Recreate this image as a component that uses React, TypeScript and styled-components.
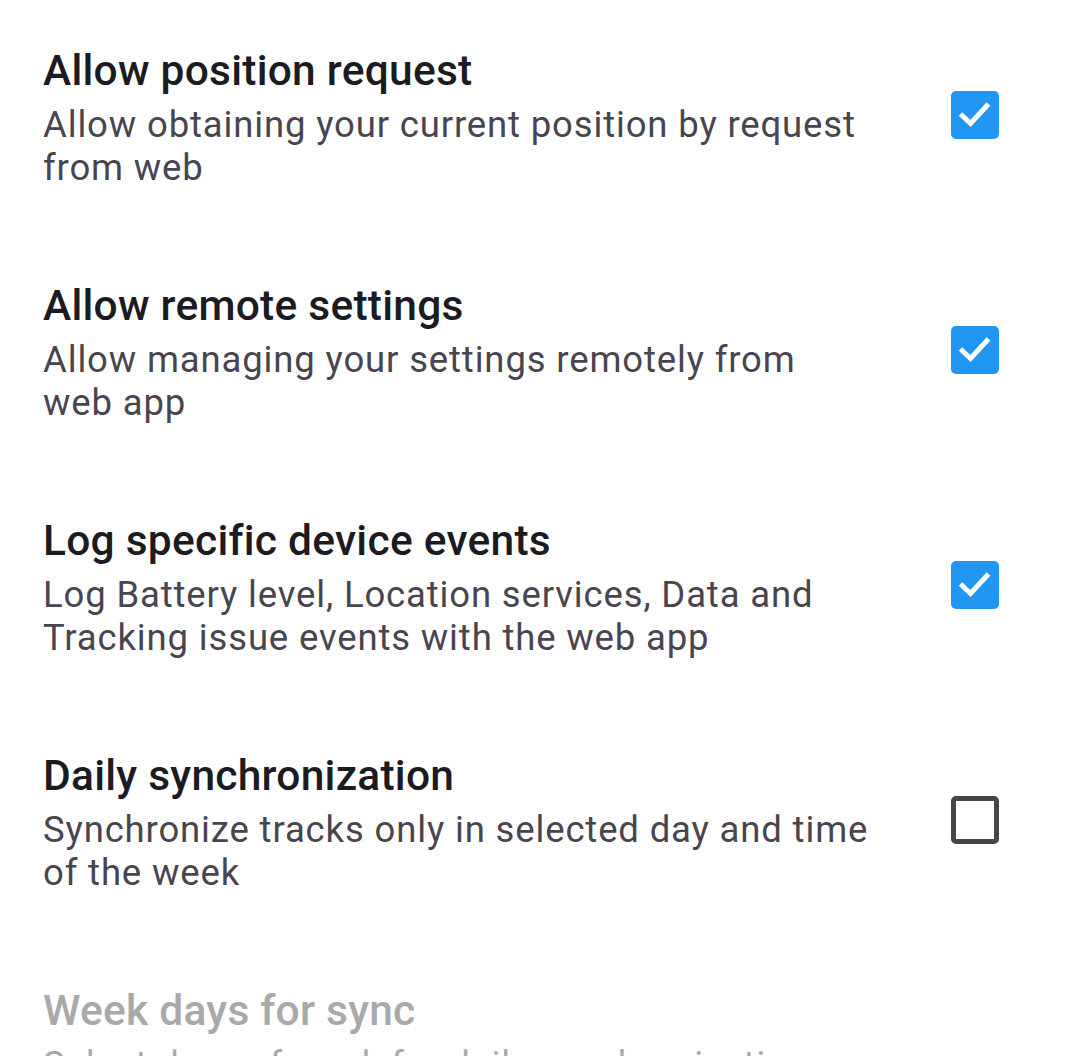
import React from 'react';
import styled, { createGlobalStyle } from 'styled-components';

const GlobalStyle = createGlobalStyle`
  html, body {
    margin: 0;
    padding: 0;
    background: #ffffff;
    overflow: hidden;
  }
  body {
    font-family: Roboto, "Noto Sans", sans-serif;
    -webkit-font-smoothing: antialiased;
  }
`;

const Screen = styled.div`
  width: 1080px;
  height: 1056px;
  overflow: hidden;
  background: #fff;
  display: flex;
  flex-direction: column;
`;

const Item = styled.div`
  display: flex;
  align-items: flex-start;
  height: 235px;
  flex-shrink: 0;
  box-sizing: border-box;
  padding: 46px 81px 0 43px;
`;

const TextBlock = styled.div`
  flex: 1;
  max-width: 826px;
  display: flex;
  flex-direction: column;
`;

const Title = styled.div<{ $disabled?: boolean }>`
  font-size: 42.5px;
  font-weight: 500;
  line-height: 50px;
  letter-spacing: 0.25px;
  color: ${p => (p.$disabled ? '#a9a9a9' : '#1c1b1f')};
`;

const Summary = styled.div<{ $disabled?: boolean }>`
  margin-top: 7px;
  font-size: 36.5px;
  line-height: 43px;
  letter-spacing: 0.85px;
  color: ${p => (p.$disabled ? '#a9a9a9' : '#49454f')};
`;

const Box = styled.div<{ $checked: boolean }>`
  margin-left: auto;
  margin-top: 45px;
  width: 48px;
  height: 48px;
  box-sizing: border-box;
  border-radius: 5px;
  flex-shrink: 0;
  background: ${p => (p.$checked ? '#2196f3' : '#fff')};
  border: ${p => (p.$checked ? 'none' : '5px solid #454946')};
  display: flex;
  align-items: center;
  justify-content: center;

  svg {
    display: block;
  }
`;

const Checkbox: React.FC<{ checked: boolean }> = ({ checked }) => (
  <Box $checked={checked}>
    {checked && (
      <svg width="48" height="48" viewBox="0 0 48 48">
        <path
          d="M9.5 23 L19.5 32.5 L37.5 13"
          fill="none"
          stroke="#fff"
          strokeWidth="5"
        />
      </svg>
    )}
  </Box>
);

const prefs = [
  {
    title: 'Allow position request',
    summary: 'Allow obtaining your current position by request from web',
    checked: true,
  },
  {
    title: 'Allow remote settings',
    summary: 'Allow managing your settings remotely from web app',
    checked: true,
  },
  {
    title: 'Log specific device events',
    summary:
      'Log Battery level, Location services, Data and Tracking issue events with the web app',
    checked: true,
  },
  {
    title: 'Daily synchronization',
    summary: 'Synchronize tracks only in selected day and time of the week',
    checked: false,
  },
];

export default function App() {
  return (
    <>
      <GlobalStyle />
      <Screen>
        {prefs.map(p => (
          <Item key={p.title}>
            <TextBlock>
              <Title>{p.title}</Title>
              <Summary>{p.summary}</Summary>
            </TextBlock>
            <Checkbox checked={p.checked} />
          </Item>
        ))}
        <Item>
          <TextBlock>
            <Title $disabled>Week days for sync</Title>
            <Summary $disabled>Select days of week for daily synchronization</Summary>
          </TextBlock>
        </Item>
      </Screen>
    </>
  );
}
